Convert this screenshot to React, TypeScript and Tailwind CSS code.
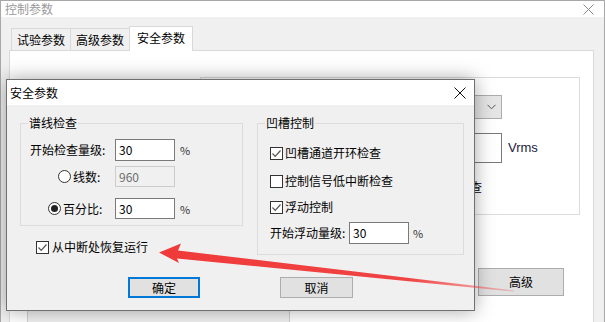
import { ReactNode } from 'react';

const Check = ({ checked }: { checked: boolean }) => (
  <span className="w-[13px] h-[13px] border border-[#333] bg-white flex items-center justify-center shrink-0">
    {checked && (
      <svg width="11" height="11" viewBox="0 0 11 11">
        <polyline points="1.5,5.5 4.2,8.3 9.5,2.5" fill="none" stroke="#555" strokeWidth="1.2" />
      </svg>
    )}
  </span>
);

const Radio = ({ checked }: { checked: boolean }) => (
  <span className="w-[13px] h-[13px] rounded-full border border-[#333] bg-white flex items-center justify-center shrink-0">
    {checked && <span className="w-[7px] h-[7px] rounded-full bg-[#222]" />}
  </span>
);

const TextBox = ({ value, disabled = false, h = 'h-[22px]' }: { value: string; disabled?: boolean; h?: string }) => (
  <div
    className={`w-[60px] ${h} border flex items-center pl-[3px] ${
      disabled ? 'border-[#cccccc] bg-[#f0f0f0] text-[#6d6d6d]' : 'border-[#7a7a7a] bg-white text-black'
    }`}
  >
    {value}
  </div>
);

const Pct = () => <span className="ml-[5px] text-[11px] text-[#333]">%</span>;

const Group = ({ title, className, children }: { title: string; className: string; children: ReactNode }) => (
  <fieldset className={`border border-[#dcdcdc] ${className}`}>
    <legend className="ml-[7px] px-[1px] leading-[16px]">{title}</legend>
    {children}
  </fieldset>
);

const SafetyDialog = () => (
  <div className="absolute left-[6px] top-[79px] w-[469px] h-[232px] border border-[#707070] bg-[#f0f0f0] shadow-[0_0_18px_rgba(0,0,0,0.35)] flex flex-col">
    {/* title bar */}
    <div className="h-[25px] bg-white flex items-center justify-between pl-[3px] pr-[8px]">
      <span>安全参数</span>
      <svg width="12" height="12" viewBox="0 0 12 12">
        <path d="M0.5 0.5 L11.5 11.5 M11.5 0.5 L0.5 11.5" stroke="#111" strokeWidth="1" />
      </svg>
    </div>

    <div className="flex-1 pl-[13px] pt-[10px]">
      <div className="flex items-start">
        {/* left column */}
        <div className="flex flex-col">
          <Group title="谱线检查" className="w-[223px] h-[111px]">
            <div className="mt-[8px] h-[22px] flex items-center pl-[9px]">
              <span className="w-[85px]">开始检查量级:</span>
              <TextBox value="30" />
              <Pct />
            </div>
            <div className="mt-[5px] h-[21px] flex items-center pl-[9px]">
              <span className="w-[85px] flex items-center pl-[28px] gap-[2px]">
                <Radio checked={false} />
                <span>线数:</span>
              </span>
              <TextBox value="960" disabled h="h-[21px]" />
            </div>
            <div className="mt-[11px] h-[21px] flex items-center pl-[9px]">
              <span className="w-[85px] flex items-center pl-[18px] gap-[2px]">
                <Radio checked />
                <span>百分比:</span>
              </span>
              <TextBox value="30" h="h-[21px]" />
              <Pct />
            </div>
          </Group>
          <div className="mt-[13px] h-[16px] flex items-center pl-[16px] gap-[3px]">
            <Check checked />
            <span>从中断处恢复运行</span>
          </div>
        </div>

        {/* right group */}
        <Group title="凹槽控制" className="ml-[14px] w-[207px] h-[140px]">
          <div className="pl-[12px]">
            <div className="mt-[14px] h-[16px] flex items-center gap-[2px]">
              <Check checked />
              <span>凹槽通道开环检查</span>
            </div>
            <div className="mt-[12px] h-[16px] flex items-center gap-[2px]">
              <Check checked={false} />
              <span>控制信号低中断检查</span>
            </div>
            <div className="mt-[10px] h-[16px] flex items-center gap-[2px]">
              <Check checked />
              <span>浮动控制</span>
            </div>
            <div className="mt-[7px] h-[22px] flex items-center">
              <span className="w-[79px]">开始浮动量级:</span>
              <TextBox value="30" />
              <span className="ml-[4px] text-[11px] text-[#333]">%</span>
            </div>
          </div>
        </Group>
      </div>

      {/* buttons */}
      <div className="mt-[22px] flex">
        <button className="ml-[108px] w-[72px] h-[21px] border-2 border-[#0078d7] bg-[#e1e1e1] flex items-center justify-center">
          确定
        </button>
        <button className="ml-[80px] w-[73px] h-[21px] border border-[#adadad] bg-[#e1e1e1] flex items-center justify-center">
          取消
        </button>
      </div>
    </div>
  </div>
);

const Arrow = () => (
  <svg className="absolute inset-0 pointer-events-none" width="605" height="322" viewBox="0 0 605 322">
    <defs>
      <linearGradient id="fade" x1="159" y1="0" x2="515" y2="0" gradientUnits="userSpaceOnUse">
        <stop offset="0" stopColor="#f03a3a" stopOpacity="1" />
        <stop offset="0.7" stopColor="#f03a3a" stopOpacity="0.95" />
        <stop offset="1" stopColor="#f03a3a" stopOpacity="0.25" />
      </linearGradient>
    </defs>
    <polygon
      points="159,252.5 181,243.5 178,250.5 514,290.6 514,291.6 177,258.5 179,263"
      fill="url(#fade)"
    />
  </svg>
);

export default function App() {
  return (
    <div className="relative w-[605px] h-[322px] overflow-hidden bg-[#f0f0f0] text-[12px] leading-[16px] text-black font-['Noto_Sans_CJK_SC','Noto_Sans',sans-serif]">
      {/* background window */}
      <div className="w-full h-full flex flex-col border-t border-l border-r border-[#a8a8a8]">
        <div className="h-[25px] bg-white flex items-center justify-between pl-[4px] pr-[10px] text-[#9a9a9a]">
          <span>控制参数</span>
          <svg width="11" height="11" viewBox="0 0 11 11">
            <path d="M0.5 0.5 L10.5 10.5 M10.5 0.5 L0.5 10.5" stroke="#8a8a8a" strokeWidth="1" />
          </svg>
        </div>
        <div className="flex-1 flex flex-col pt-[9px]">
          {/* tabs */}
          <div className="flex items-end h-[25px] pl-[10px]">
            <div className="w-[60px] h-[23px] border border-b-0 border-[#d9d9d9] bg-[#f0f0f0] flex items-center justify-center">
              试验参数
            </div>
            <div className="w-[60px] h-[23px] -ml-px border border-b-0 border-[#d9d9d9] bg-[#f0f0f0] flex items-center justify-center">
              高级参数
            </div>
            <div className="relative z-10 w-[64px] h-[25px] -ml-px border border-b-0 border-[#d9d9d9] bg-white flex items-center justify-center pb-[2px]">
              安全参数
            </div>
          </div>
          {/* tab pane */}
          <div className="flex-1 -mt-px ml-[8px] mr-[10px] border border-b-0 border-[#d9d9d9] bg-white flex flex-col">
            <div className="ml-[190px] mt-[26px] w-[380px] h-[138px] border border-[#dcdcdc]">
              <div className="ml-[151px] mt-[17px] w-[150px] h-[24px] border border-[#acacac] bg-[#e5e5e5] flex items-center justify-end pr-[5px]">
                <svg width="9" height="6" viewBox="0 0 9 6">
                  <polyline points="0.5,0.8 4.5,4.8 8.5,0.8" fill="none" stroke="#555" strokeWidth="1" />
                </svg>
              </div>
              <div className="mt-[14px] flex items-center">
                <div className="ml-[151px] w-[150px] h-[30px] border border-[#7a7a7a] bg-white" />
                <span className="ml-[6px] text-[13px] text-[#1a1a40] font-['Liberation_Sans',sans-serif]">Vrms</span>
              </div>
              <div className="mt-[16px] ml-[233px] w-[48px] text-right">开环检查</div>
            </div>
            <button className="mt-[53px] ml-[468px] w-[86px] h-[28px] border border-[#adadad] bg-[#e1e1e1] flex items-center justify-center">
              高级
            </button>
            <div className="mt-[7px] ml-[17px] w-[263px] h-[20px] border border-[#cfcfcf] bg-[#f0f0f0]" />
          </div>
        </div>
      </div>

      <SafetyDialog />
      <Arrow />
    </div>
  );
}
